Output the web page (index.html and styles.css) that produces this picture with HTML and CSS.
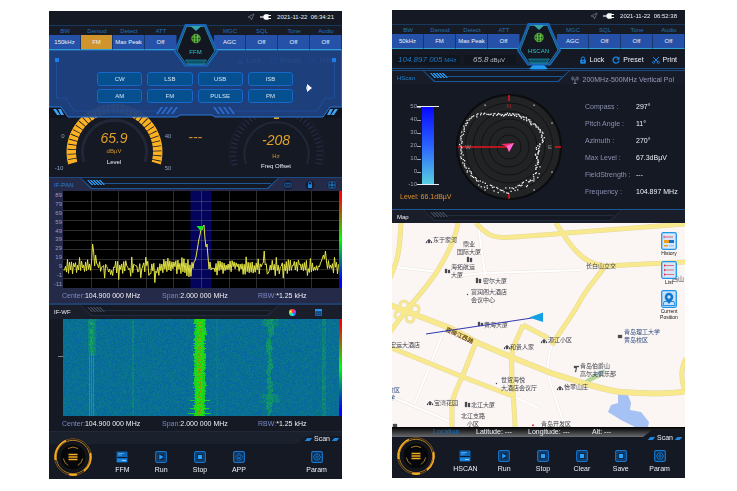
FILE: index.html
```html
<!DOCTYPE html>
<html lang="en">
<head>
    <meta charset="UTF-8">
    <meta name="viewport" content="width=device-width, initial-scale=1.0">
    <title>Spectrum Receiver</title>
    <link rel="stylesheet" href="styles.css">
</head>
<body>
    <!-- shared icons -->
    <svg class="defs" aria-hidden="true">
        <symbol id="i-send" viewBox="0 0 8 8"><path d="M7 1 1 4l2.600.6L4.400 7z" fill="none" stroke="#6c7484" stroke-width=".8"/></symbol>
        <symbol id="i-plug" viewBox="0 0 12 8"><path d="M0 4h4" stroke="#fff" stroke-width="1.200"/><path d="M3.500 2.500 5 1.300h3.500v5.400H5L3.500 5.500z" fill="#fff"/><path d="M8 2.500h3M8 5.500h3" stroke="#fff" stroke-width="1.100"/></symbol>
        <symbol id="i-hex" viewBox="0 0 44 46">
            <path d="M11.500 1h20L43 27.500 33 41.500H11L1 27.500z" fill="#151b29" stroke="#1a62b8" stroke-width="2"/>
            <path d="M12.500 2.500h18L41 27 32 40H12L3 27z" fill="#121722" stroke="#25b5dc" stroke-width=".7"/>
            <path d="M16.500 2h11L22 7z" fill="#36a6a8"/>
            <path d="M11.500 36h21l-3 4h-15z" fill="#0d5266" stroke="#1c9dc0" stroke-width=".6"/>
            <circle cx="22" cy="14.500" r="4.300" fill="#1d5a26" stroke="#6fce3c" stroke-width=".7"/>
            <path d="M18 13h8M18 16h8M20.500 10.500v8M23.500 10.500v8M22 14.500l3-3" fill="none" stroke="#8be04c" stroke-width=".6"/>
        </symbol>
        <symbol id="i-lock" viewBox="0 0 8 8"><path d="M2.300 4V2.600a1.700 1.700 0 0 1 3.400 0V4" fill="none" stroke="#1787e8" stroke-width="1"/><rect x="1.200" y="3.700" width="5.600" height="4" rx=".6" fill="#1787e8"/><circle cx="4" cy="5.500" r=".7" fill="#0d2038"/></symbol>
        <symbol id="i-preset" viewBox="0 0 8 8"><path d="M6.400 2.300A3 3 0 1 0 7 4.600" fill="none" stroke="#1787e8" stroke-width="1.300"/><path d="M7.500.6v3.200H4.300z" fill="#1787e8"/></symbol>
        <symbol id="i-print" viewBox="0 0 8 8"><path d="M1 1l5 5M7 1 2.500 5.500" stroke="#1787e8" stroke-width="1"/><circle cx="1.700" cy="6.300" r="1.100" fill="none" stroke="#1787e8" stroke-width=".9"/><circle cx="6.300" cy="6.300" r="1.100" fill="none" stroke="#1787e8" stroke-width=".9"/></symbol>
        <symbol id="i-fit" viewBox="0 0 10 10"><circle cx="5" cy="5" r="4.700" fill="#161c30"/><rect x="1.800" y="3.300" width="6.400" height="3.600" rx=".5" fill="none" stroke="#1b72c4" stroke-width=".8"/><path d="M3.500 5h1M5.500 5h1" stroke="#1b72c4"/></symbol>
        <symbol id="i-hold" viewBox="0 0 10 10"><circle cx="5" cy="5" r="4.700" fill="#161c30"/><rect x="3" y="4.200" width="4" height="3.800" fill="#1b83dc"/><path d="M3.500 4V3a1.500 1.500 0 0 1 3 0v1" fill="none" stroke="#1b83dc" stroke-width=".7"/></symbol>
        <symbol id="i-grid" viewBox="0 0 10 10"><circle cx="5" cy="5" r="4.700" fill="#161c30"/><rect x="1.800" y="1.800" width="6.400" height="6.400" rx="1" fill="none" stroke="#1b72c4" stroke-width=".8"/><path d="M5 2v6M2 5h6" stroke="#1b83dc" stroke-width="1"/></symbol>
        <symbol id="i-menu" viewBox="0 0 40 40">
            <circle cx="20" cy="20" r="19" fill="#11141d"/>
            <circle cx="20" cy="20" r="18.300" fill="none" stroke="#8a601c" stroke-width=".8"/>
            <circle cx="20" cy="20" r="16.700" fill="none" stroke="#c88a22" stroke-width=".9"/>
            <path d="M2.500 23A18 18 0 0 1 13 3.500M37.500 16A18 18 0 0 1 31 34M16 37.500A18 18 0 0 0 24 37.600" fill="none" stroke="#f5ab22" stroke-width="1.800"/>
            <circle cx="20" cy="20" r="13" fill="#05070b" stroke="#2a2419" stroke-width=".5"/>
            <path d="M15 11.500a10 10 0 0 1 10 0M10.300 21.500a10 10 0 0 0 5 7M29.700 21.500a10 10 0 0 1-5 7" fill="none" stroke="#b8832a" stroke-width=".9"/>
            <path d="M15.500 17.500h9M15.500 20h9M15.500 22.500h9" stroke="#f5ab22" stroke-width="1.300"/>
        </symbol>
        <symbol id="i-mode" viewBox="0 0 12 12"><rect x=".5" y=".5" width="11" height="11" rx="1" fill="#0d66b8"/><path d="M1 6h10v1.300H1z" fill="#0c1d33"/><path d="M2 2.500h6M2 4h4" stroke="#6fbaf5" stroke-width=".7"/><path d="M1 7.500h10v3.500H1z" fill="#1b86e0"/><path d="M6 9.500h4" stroke="#9bd0fa" stroke-width=".9"/></symbol>
        <symbol id="i-run" viewBox="0 0 12 12"><rect x=".7" y=".7" width="10.600" height="10.600" rx="1.200" fill="#0b2a4c" stroke="#1877cd" stroke-width="1.200"/><rect x="2.700" y="2.700" width="6.600" height="6.600" fill="none" stroke="#14508c" stroke-width=".6"/><path d="M4.300 3.600 8.500 6 4.300 8.400z" fill="#2aa0fa"/></symbol>
        <symbol id="i-stop" viewBox="0 0 12 12"><rect x=".7" y=".7" width="10.600" height="10.600" rx="1.200" fill="#0b2a4c" stroke="#1877cd" stroke-width="1.200"/><rect x="2.500" y="2.500" width="7" height="7" fill="none" stroke="#14508c" stroke-width=".6"/><rect x="4" y="4" width="4" height="4" fill="#2aa0fa"/></symbol>
        <symbol id="i-app" viewBox="0 0 12 12"><rect x=".7" y=".7" width="10.600" height="10.600" rx="1.200" fill="#0b2a4c" stroke="#1877cd" stroke-width="1.200"/><circle cx="6" cy="6" r="3.500" fill="none" stroke="#1b6db8" stroke-width=".7"/><circle cx="6" cy="5.600" r="1.800" fill="none" stroke="#1b7ed6" stroke-width=".7"/><path d="M4.500 9 6 6l1.500 3" fill="none" stroke="#1b7ed6" stroke-width=".7"/></symbol>
        <symbol id="i-param" viewBox="0 0 12 12"><rect x=".7" y=".7" width="10.600" height="10.600" rx="1.200" fill="#0b2a4c" stroke="#1877cd" stroke-width="1.200"/><path d="M4.300 3h3.400l1.800 3-1.800 3H4.300L2.500 6z" fill="none" stroke="#1b7ed6" stroke-width=".9"/><circle cx="6" cy="6" r="1.200" fill="none" stroke="#1b7ed6" stroke-width=".8"/></symbol>
    </svg>

    <main class="screens">
        <!-- fixed frequency mode -->
        <section class="device">
            <div class="status-bar">
                <svg class="icon-send"><use href="#i-send"/></svg>
                <svg class="icon-plug"><use href="#i-plug"/></svg>
                <time>2021-11-22&nbsp; 06:34:21</time>
            </div>
            <div class="params">
                <div class="param"><label for="f-bw">BW</label><button id="f-bw">150kHz</button></div>
                <div class="param active"><label for="f-demod">Demod</label><button id="f-demod">FM</button></div>
                <div class="param"><label for="f-detect">Detect</label><button id="f-detect">Max Peak</button></div>
                <div class="param"><label for="f-att">ATT</label><button id="f-att">Off</button></div>
                <button class="mode"><svg><use href="#i-hex"/></svg><span>FFM</span></button>
                <div class="param"><label for="f-mgc">MGC</label><button id="f-mgc">AGC</button></div>
                <div class="param"><label for="f-sql">SQL</label><button id="f-sql">Off</button></div>
                <div class="param"><label for="f-tone">Tone</label><button id="f-tone">Off</button></div>
                <div class="param"><label for="f-audio">Audio</label><button id="f-audio">Off</button></div>
            </div>

            <div class="under-popup">
                <div class="toolbar">
                    <div class="actions">
                        <button><svg><use href="#i-lock"/></svg>Lock</button>
                        <button><svg><use href="#i-preset"/></svg>Preset</button>
                        <button><svg><use href="#i-print"/></svg>Print</button>
                    </div>
                </div>
                <div class="gauges">
                    <svg class="gauge" viewBox="0 0 131 106">
                        <g fill="none">
                            <path d="M19.600 93.300A47.500 47.500 0 1 1 111.400 93.300" stroke="#f2a81f" stroke-width="1"/>
                            <path d="M24 92A43 43 0 1 1 107 92" stroke="#fbb122" stroke-width="9" stroke-dasharray="3.900 .8"/>
                            <path d="M35 91A32 32 0 1 1 96 91" stroke="#222738" stroke-width="3"/>
                        </g>
                        <g class="scale">
                            <text x="14" y="67">0</text><text x="119" y="67">40</text>
                            <text x="10" y="99">-10</text><text x="119" y="99">50</text>
                        </g>
                        <text class="digits" x="65" y="72">65.9</text>
                        <text class="unit" x="65" y="82">dBµV</text>
                        <text class="name" x="65" y="93">Level</text>
                    </svg>
                    <div class="blank">---</div>
                    <svg class="gauge" viewBox="0 0 131 106">
                        <g fill="none">
                            <path d="M24 94A43 43 0 1 1 107 94" stroke="#282b48" stroke-width="6" stroke-dasharray="1.200 3"/>
                            <path d="M20 94A47 47 0 1 1 111 94" stroke="#1e2133" stroke-width="1"/>
                            <path d="M35 93A32 32 0 1 1 96 93" stroke="#222738" stroke-width="2"/>
                        </g>
                        <path d="M63 46h5v2h-5z" fill="#e0a020"/>
                        <text class="digits" x="65" y="74">-208</text>
                        <text class="unit" x="65" y="87">Hz</text>
                        <text class="name" x="65" y="97">Freq Offset</text>
                    </svg>
                </div>

                <!-- demodulation picker -->
                <div class="popup">
                    <svg class="popup-frame" viewBox="0 0 293 68" preserveAspectRatio="none">
                        <path d="M0 56h20v12H0zM293 56h-20v12h20z" fill="#10141f"/>
                        <path d="M0 0H293V57H281L274 67H166L163 65H131L128 67H19L12 57H0Z" fill="#1e4182" fill-opacity=".95" stroke="#2a78d8" stroke-width="1"/>
                        <path d="M7.500 10V48H17L25 61H108M285.500 10V48H276L268 61H185" fill="none" stroke="#2552a0" stroke-width=".8"/>
                        <path d="M6 8h4v4H6zM283 8h4v4h-4z" fill="#1e7cee"/>
                        <path d="M4 59h3l4 6H8zM9 59h3l3 6h-3zM289 59h-3l-4 6h3zM284 59h-3l-3 6h3z" fill="#3fa2f5"/>
                        <path d="M107 64l5-7h2l-5 7zM112 64l5-7h2l-5 7zM117 64l5-7h2l-5 7zM122 64l5-7h2l-5 7zM186 64l-5-7h-2l5 7zM181 64l-5-7h-2l5 7zM176 64l-5-7h-2l5 7zM171 64l-5-7h-2l5 7z" fill="#2c70d6"/>
                    </svg>
                    <div class="choices">
                        <button>CW</button><button>LSB</button><button>USB</button><button>ISB</button>
                        <button>AM</button><button>FM</button><button>PULSE</button><button>PM</button>
                    </div>
                    <button class="next" aria-label="Next"><svg viewBox="0 0 6 8"><path d="M1 0l5 4-5 4z" fill="#fff"/><path d="M0 2l2 2-2 2z" fill="#9db8e0"/></svg></button>
                </div>
            </div>

            <header class="panel-head lit">
                <h2>IF-PAN</h2>
                <div class="rail"><i></i></div>
                <div class="head-icons">
                    <button aria-label="Fit"><svg><use href="#i-fit"/></svg></button>
                    <button aria-label="Hold"><svg><use href="#i-hold"/></svg></button>
                    <button aria-label="Grid"><svg><use href="#i-grid"/></svg></button>
                </div>
            </header>
            <div class="plot lit">
                <div class="axis">
                    <span>89</span><span>79</span><span>69</span><span>59</span><span>49</span><span>39</span><span>29</span><span>19</span><span>9</span><span>-1</span><span>-11</span>
                </div>
                <canvas id="spectrum"></canvas>
                <div class="heat"></div>
            </div>
            <div class="readout lit">
                <span><em>Center:</em>104.900 000 MHz</span>
                <span><em>Span:</em>2.000 000 MHz</span>
                <span><em>RBW:</em>*1.25 kHz</span>
            </div>

            <header class="panel-head waterfall-head">
                <h2>IF-WF</h2>
                <div class="rail"><i></i></div>
                <div class="head-icons">
                    <button aria-label="Palette"><span class="wheel"></span></button>
                    <button aria-label="Table"><svg viewBox="0 0 8 8"><path d="M.5.500h7v7h-7z" fill="#123a68" stroke="#1c6fc0"/><path d="M0 0h8v2.500H0z" fill="#2a90ee"/><path d="M3 2v6M5.500 2v6M0 5h8" stroke="#1c6fc0" stroke-width=".6"/></svg></button>
                </div>
            </header>
            <div class="plot">
                <div class="axis tick"></div>
                <canvas id="waterfall"></canvas>
                <div class="heat"></div>
            </div>
            <div class="readout">
                <span><em>Center:</em>104.900 000 MHz</span>
                <span><em>Span:</em>2.000 000 MHz</span>
                <span><em>RBW:</em>*1.25 kHz</span>
            </div>

            <nav class="nav">
                <svg class="nav-frame" viewBox="0 0 293 48" preserveAspectRatio="none">
                    <path d="M0 0H293V5H258L247 13H0z" fill="#1b202d"/>
                    <path d="M0 .5H293" stroke="#222838"/>
                </svg>
                <button class="menu" aria-label="Menu"><svg><use href="#i-menu"/></svg></button>
                <button class="scan">Scan</button>
                <div class="nav-items">
                    <button><svg><use href="#i-mode"/></svg>FFM</button>
                    <button><svg><use href="#i-run"/></svg>Run</button>
                    <button><svg><use href="#i-stop"/></svg>Stop</button>
                    <button><svg><use href="#i-app"/></svg>APP</button>
                    <button class="last"><svg><use href="#i-param"/></svg>Param</button>
                </div>
            </nav>
        </section>

        <!-- direction finding mode -->
        <section class="device">
            <div class="status-bar">
                <svg class="icon-send"><use href="#i-send"/></svg>
                <svg class="icon-plug"><use href="#i-plug"/></svg>
                <time>2021-11-22&nbsp; 06:52:38</time>
            </div>
            <div class="params">
                <div class="param"><label for="h-bw">BW</label><button id="h-bw">50kHz</button></div>
                <div class="param"><label for="h-demod">Demod</label><button id="h-demod">FM</button></div>
                <div class="param"><label for="h-detect">Detect</label><button id="h-detect">Max Peak</button></div>
                <div class="param"><label for="h-att">ATT</label><button id="h-att">Off</button></div>
                <button class="mode"><svg><use href="#i-hex"/></svg><span>HSCAN</span></button>
                <div class="param"><label for="h-mgc">MGC</label><button id="h-mgc">AGC</button></div>
                <div class="param"><label for="h-sql">SQL</label><button id="h-sql">Off</button></div>
                <div class="param"><label for="h-tone">Tone</label><button id="h-tone">Off</button></div>
                <div class="param"><label for="h-audio">Audio</label><button id="h-audio">Off</button></div>
            </div>
            <div class="toolbar">
                <svg class="toolbar-frame" viewBox="0 0 293 21" preserveAspectRatio="none">
                    <path d="M0 19.500H136L141 20.500H152L157 19.500H293" fill="none" stroke="#1a4f8c"/>
                    <path d="M141 16h11l4 4h-19z" fill="#1f9bf0"/>
                </svg>
                <div class="freq"><b>104.897 005</b> MHz</div>
                <div class="amp"><b>65.8</b> dBµV</div>
                <div class="actions">
                    <button><svg><use href="#i-lock"/></svg>Lock</button>
                    <button><svg><use href="#i-preset"/></svg>Preset</button>
                    <button><svg><use href="#i-print"/></svg>Print</button>
                </div>
            </div>

            <header class="panel-head blue">
                <h2>HScan</h2>
                <div class="rail"><i></i></div>
                <div class="antenna">
                    <svg viewBox="0 0 8 8"><path d="M1.600.5a3 3 0 0 0 0 4M6.400.5a3 3 0 0 1 0 4M2.800 1.300a1.600 1.600 0 0 0 0 2.400M5.200 1.300a1.600 1.600 0 0 1 0 2.400M4 2.500V7.500M2.500 7.500h3" fill="none" stroke="#8189a8" stroke-width=".9"/></svg>
                    200MHz-500MHz Vertical Pol
                </div>
            </header>
            <div class="finder">
                <div class="meter">
                    <div class="meter-row">
                        <ol><li>50</li><li>40</li><li>30</li><li>20</li><li>10</li><li>0</li><li>-10</li></ol>
                        <div class="meter-bar"></div>
                    </div>
                    <p>Level: 66.1dBµV</p>
                </div>
                <svg class="compass" viewBox="-54 -54 108 108">
                    <circle r="53" fill="#0b0c0e"/>
                    <circle r="51" fill="#222324"/>
                    <g fill="none" stroke="#0d0e10" stroke-width=".8">
                        <circle r="12"/><circle r="20"/><circle r="28"/><circle r="36"/><circle r="44"/>
                    </g>
                    <path d="M0-52v6M0 52v-6M46 0h6M-51 0H0" stroke="#e8131b" stroke-width="1.500"/>
                    <text x="0" y="-39" class="north">N</text>
                    <text x="-41" y="2">W</text>
                    <text x="41" y="2">E</text>
                    <g id="bearings" fill="#f4f4f4"></g>
                    <path d="M-8-3 5-4 0 5-2 0z" fill="#f02a68"/>
                    <path d="M-3-1 5-4 0 5-2 0z" fill="#ff6ad0"/>
                </svg>
                <dl class="readings">
                    <dt>Compass :</dt><dd>297°</dd>
                    <dt>Pitch Angle :</dt><dd>11°</dd>
                    <dt>Azimuth :</dt><dd>270°</dd>
                    <dt>Max Level :</dt><dd>67.3dBµV</dd>
                    <dt>FieldStrength :</dt><dd>---</dd>
                    <dt>Frequency :</dt><dd>104.897 MHz</dd>
                </dl>
            </div>

            <header class="panel-head map-head">
                <h2>Map</h2>
                <div class="rail"><i></i></div>
                <div class="head-icons"></div>
            </header>
            <div class="map">
                <svg viewBox="0 0 293 204" preserveAspectRatio="xMidYMid slice" lang="zh-CN">
                    <defs>
                        <g id="streets">
                            <path d="M9 0C8 15 8 30 3 42L-2 55M66 0C63 20 50 40 46 47S22 79 16 85L-2 109M84 0C95 12 100 16 123 14L293 1M164 0C172 12 175 18 184 28S203 42 213 43L293 39M213 43C205 55 195 65 187 80S170 105 160 122"/>
                            <path d="M0 125 71 154 123 174M84 119 71 152C65 165 60 175 60 185V204M131 102 121 125C117 140 122 170 123 204M131 102 156 115M294 135C289 145 288 155 293 168"/>
                            <path class="main" d="M-2 82 16 89 58 105 84 119 119 134 159 150C190 160 215 168 229 169S275 172 294 168"/>
                            <g class="loops">
                                <circle cx="12" cy="82" r="4"/>
                                <circle cx="23" cy="86" r="4"/>
                                <circle cx="7" cy="92" r="4"/>
                                <circle cx="18" cy="95" r="4"/>
                            </g>
                        </g>
                    </defs>
                    <rect width="293" height="204" fill="#fbf6f3"/>
                    <path class="lane-edge" d="M4 44 46 49M71 52 93 50 189 47M86 2 93 50 98 84M53 105 23 180M0 174 59 199M123 174 146 185M160 122C155 135 155 150 160 165S168 190 173 204"/>
                    <path class="lane" d="M4 44 46 49M71 52 93 50 189 47M86 2 93 50 98 84M53 105 23 180M0 174 59 199M123 174 146 185M160 122C155 135 155 150 160 165S168 190 173 204"/>
                    <path d="M226 170 236 172 239 180 238 187 249 189 257 199 256 204H243L229 197 216 189 219 182 226 180z" fill="#a6c1f4"/>
                    <path d="M192 158 205 149 214 147 208 154 196 160z" fill="#b5d69a"/>
                    <path d="M202 150 213 146 207 153z" fill="#a9cbe8"/>
                    <use class="road-edge" href="#streets"/>
                    <use class="road" href="#streets"/>
                    <g class="poi">
                        <path d="M34 19l3-3 3 3v1h-1v-2h-1v2h-2v-2h-1v2h-1zM75 34h2v5h-2zM78 35h2v4h-2zM53 46h2v4h-2zM56 47h2v3h-2zM84 55h2v5h-2zM87 56h2v4h-2zM86 99h2v4h-2zM89 100h2v3h-2zM112 125l3-3 3 3v1h-1v-2h-1v2h-2v-2h-1v2h-1zM149 119l3-3 3 3v1h-1v-2h-1v2h-2v-2h-1v2h-1zM165 166l3-3 3 3v1h-1v-2h-1v2h-2v-2h-1v2h-1zM35 181l3-3 3 3v1h-1v-2h-1v2h-2v-2h-1v2h-1zM73 179h2v5h-2zM76 180h2v4h-2zM226 112h4v3h-4zM182 143h5v1h-2l-1 5h-1l1-4h-2zM75 71h1v1h-1zM104 160h1v1h-1zM1 201h4v3H1z"/>
                        <path class="red" d="M140 203l1-2 1 2z"/>
                    </g>
                    <g class="place">
                        <text x="41" y="19">东于家河</text>
                        <text x="71" y="23">鼎业</text>
                        <text x="65" y="31">国际大厦</text>
                        <text x="59" y="46">海拓航运</text>
                        <text x="59" y="54">大厦</text>
                        <text x="91" y="60">密尔大厦</text>
                        <text x="79" y="71">富润阁大酒店</text>
                        <text x="79" y="79">会议中心</text>
                        <text x="194" y="45">长白山立交</text>
                        <text x="280" y="58">西山</text>
                        <text x="92" y="104">黄海大厦</text>
                        <text x="118" y="126">和贵人家</text>
                        <text x="156" y="119">源江小区</text>
                        <text x="-2" y="124">宏运大酒店</text>
                        <text x="109" y="159">世贸海悦</text>
                        <text x="109" y="167">大酒店会议厅</text>
                        <text x="172" y="166">怡翠山庄</text>
                        <text x="188" y="145">青岛伯爵山</text>
                        <text x="188" y="153">高尔夫俱乐部</text>
                        <text x="42" y="182">宝湾花园</text>
                        <text x="79" y="184">北江大厦</text>
                        <text x="69" y="195">北江支路</text>
                        <text x="75" y="203">小区</text>
                        <text x="149" y="203">青岛开发区</text>
                        <text class="school" x="232" y="111">青岛理工大学</text>
                        <text class="school" x="232" y="119">黄岛校区</text>
                        <text class="school" x="-4" y="169">校区</text>
                        <text class="school" x="-3" y="177">学</text>
                        <text class="street" transform="translate(53 108) rotate(25)">嘉陵江西路</text>
                    </g>
                    <path d="M34 111 140 95" stroke="#3238b4" stroke-width="1"/>
                    <path d="M137 94.500 151 89.500V99z" fill="#15a0e4"/>
                </svg>
                <div class="map-tools">
                    <button>
                        <svg viewBox="0 0 16 18"><rect x=".7" y=".7" width="14.600" height="16.600" rx="1.500" fill="#d6e7fa" stroke="#1f95ec" stroke-width="1.300"/><path d="M3 5h9M3 3.500v3" stroke="#e06070" stroke-width="1"/><path d="M3 8h5v3H3z" fill="#f0a020"/><path d="M8 8h5v3H8z" fill="#1273cc"/><path d="M3 13h4v1.500H3z" fill="#f0a020"/><path d="M8 13h5v1.500H8z" fill="#a9c8ee"/></svg>
                        History
                    </button>
                    <button>
                        <svg viewBox="0 0 16 18"><rect x=".7" y=".7" width="14.600" height="16.600" rx="1.500" fill="#d6e7fa" stroke="#1f95ec" stroke-width="1.300"/><path d="M3 4.500h10M3 9h10M3 13.500h10" stroke="#e06070" stroke-width=".9"/><path d="M3 3l2 1.500L3 6zM3 7.500 5 9l-2 1.500zM3 12l2 1.500L3 15z" fill="#d84555"/></svg>
                        List
                    </button>
                    <button>
                        <svg viewBox="0 0 16 18"><rect x=".7" y=".7" width="14.600" height="16.600" rx="1.500" fill="#c9e2fa" stroke="#1f95ec" stroke-width="1.300"/><path d="M3 11.500h10l1 4H2z" fill="none" stroke="#1b86dc" stroke-width=".9"/><path d="M8 14C5 10.500 3.700 9 3.700 7a4.300 4.300 0 0 1 8.600 0c0 2-1.300 3.500-4.300 7z" fill="#1378cc"/><circle cx="8" cy="7" r="1.700" fill="#c9e2fa"/></svg>
                        Current<br>Position
                    </button>
                </div>
            </div>
            <div class="location">
                <a href="#location">Location</a>
                <span>Latitude: ---</span>
                <span>Longitude: ---</span>
                <span>Alt: ---</span>
            </div>

            <nav class="nav raised">
                <svg class="nav-frame" viewBox="0 0 293 48" preserveAspectRatio="none">
                    <path d="M0 7H251L260 0H293V48H0z" fill="#151924"/>
                </svg>
                <button class="menu" aria-label="Menu"><svg><use href="#i-menu"/></svg></button>
                <button class="scan">Scan</button>
                <div class="nav-items">
                    <button><svg><use href="#i-mode"/></svg>HSCAN</button>
                    <button><svg><use href="#i-run"/></svg>Run</button>
                    <button><svg><use href="#i-stop"/></svg>Stop</button>
                    <button><svg><use href="#i-stop"/></svg>Clear</button>
                    <button><svg><use href="#i-stop"/></svg>Save</button>
                    <button><svg><use href="#i-param"/></svg>Param</button>
                </div>
            </nav>
        </section>
    </main>

    <script src="script.js"></script>
</body>
</html>
```
FILE: styles.css
```css
* {
    box-sizing: border-box;
}

body {
    margin: 0;
    background: #fff;
    font-family: "Liberation Sans", "Noto Sans CJK SC", sans-serif;
    font-size: 7px;
    line-height: 8px;
    color: #eef0f6;
}

button {
    margin: 0;
    padding: 0;
    border: 0;
    background: none;
    color: inherit;
    font: inherit;
    cursor: pointer;
}

h2, p, dl, dd, ol {
    margin: 0;
    padding: 0;
}

svg {
    display: block;
}

.defs {
    display: none;
}

.screens {
    display: grid;
    grid-template-columns: 1fr 1fr;
    align-items: start;
    gap: 50px;
    padding: 10px 52px 12px 49px;
}

.device {
    background: #151924;
    min-width: 0;
}

.device:first-child {
    margin-top: 1px;
}

/* status bar */
.status-bar {
    display: flex;
    align-items: center;
    justify-content: flex-end;
    height: 14px;
    padding: 0 8px 2px 0;
    font-size: 6px;
}

.icon-send {
    width: 8px;
    height: 8px;
    margin-right: 5px;
}

.icon-plug {
    width: 12px;
    height: 8px;
    margin-right: 5px;
}

/* parameter strip */
.params {
    display: grid;
    grid-template-columns: repeat(4, 32fr) 37fr repeat(4, 32fr);
    position: relative;
    z-index: 3;
    background: #171b25;
    border-top: 1px solid #17395f;
    font-size: 6px;
}

.param {
    display: flex;
    flex-direction: column;
    text-align: center;
}

.param label {
    height: 9px;
    line-height: 10px;
    color: #2272b8;
}

.param button {
    height: 15px;
    background: #2552a8;
    border-right: 1px solid #16366f;
    border-bottom: 1px solid #2d9fd0;
    white-space: nowrap;
}

.param.active button {
    background: #cf942c;
}

.mode {
    position: relative;
    color: #2fc4c8;
    font-size: 6px;
}

.mode svg {
    position: absolute;
    top: -2px;
    left: 50%;
    width: 44px;
    height: 46px;
    margin-left: -22px;
}

.mode span {
    position: absolute;
    top: 22px;
    left: 0;
    right: 0;
    text-align: center;
}

/* toolbar */
.toolbar {
    display: flex;
    align-items: center;
    position: relative;
    height: 21px;
    padding: 0 8px 0 2px;
    white-space: nowrap;
}

.toolbar-frame {
    position: absolute;
    inset: 0;
    width: 100%;
    height: 21px;
}

.freq,
.amp {
    height: 10px;
    line-height: 10px;
    font-size: 6px;
    background: #11151d;
}

.freq b,
.amp b {
    font-size: 8px;
    font-style: italic;
    font-weight: normal;
}

.freq {
    width: 66px;
    padding-left: 4px;
    color: #1f78c4;
}

.amp {
    width: 52px;
    margin-left: 4px;
    padding-left: 9px;
    color: #b4b9c4;
}

.actions {
    display: flex;
    gap: 8px;
    margin-left: auto;
}

.actions button {
    display: flex;
    align-items: center;
    gap: 3px;
}

.actions svg {
    width: 8px;
    height: 8px;
}

/* gauges and the popup above them */
.under-popup {
    position: relative;
}

.gauges {
    display: grid;
    grid-template-columns: 131fr 31fr 131fr;
    height: 106px;
}

.gauge {
    width: 100%;
    height: 106px;
}

.gauge text {
    text-anchor: middle;
    font-size: 6px;
}

.gauge .scale {
    fill: #8ca2c0;
}

.gauge .digits {
    fill: #e0a02a;
    font-size: 14px;
    font-style: italic;
}

.gauge .unit {
    fill: #d4962a;
}

.gauge .name {
    fill: #eef0f6;
}

.blank {
    padding-top: 59px;
    text-align: center;
    font-size: 14px;
    line-height: 14px;
    color: #c88d24;
}

.popup {
    position: absolute;
    top: 0;
    left: 0;
    right: 0;
    display: flex;
    align-items: center;
    height: 68px;
    padding: 7px 30px 0 48px;
}

.popup-frame {
    position: absolute;
    inset: 0;
    width: 100%;
    height: 68px;
}

.choices {
    display: grid;
    grid-template-columns: repeat(4, 1fr);
    gap: 3px 5px;
    flex: 1;
    position: relative;
}

.choices button {
    height: 14px;
    border: 1px solid #1767c6;
    border-radius: 3px;
    background: #06508f;
    color: #d5e3f4;
    font-size: 6px;
}

.next {
    position: relative;
    margin-left: 13px;
}

.next svg {
    width: 6px;
    height: 8px;
}

/* panel headers */
.panel-head {
    --edge: #232a39;
    --bar: #3a4150;
    display: flex;
    height: 14px;
    background: #1a1e2a;
    border-top: 1px solid #1b2231;
}

.panel-head h2 {
    width: 31px;
    padding-left: 5px;
    font-size: 6px;
    font-weight: normal;
    line-height: 14px;
    white-space: nowrap;
}

.rail {
    position: relative;
    flex: 1;
    height: 11px;
    background: var(--edge);
    clip-path: polygon(0 0, 100% 0, calc(100% - 11px) 100%, 11px 100%);
}

.rail::before {
    content: "";
    position: absolute;
    inset: 0 1px 1px;
    background: #151924;
    clip-path: polygon(0 0, 100% 0, calc(100% - 11px) 100%, 11px 100%);
}

.rail::after {
    content: "";
    position: absolute;
    top: 5px;
    left: 22px;
    right: 8px;
    height: 1px;
    background: var(--edge);
}

.rail i {
    position: absolute;
    z-index: 1;
    top: 2px;
    left: 9px;
    width: 14px;
    height: 5px;
    background: repeating-linear-gradient(90deg, var(--bar) 0 2px, #151924 2px 3px);
    transform: skewX(38deg);
}

.panel-head.lit {
    --edge: #1b5796;
    --bar: #2290e4;
    background: #262a49;
    border-color: #1b4a80;
}

.lit h2,
.blue h2 {
    color: #1f80d4;
}

.panel-head.blue {
    --edge: #1b5796;
    --bar: #2290e4;
    background: #171c28;
    border-color: #1b4a80;
}

.head-icons {
    display: flex;
    align-items: center;
    justify-content: space-between;
    width: 63px;
    padding: 0 5px 0 4px;
}

.head-icons svg {
    width: 10px;
    height: 10px;
}

.waterfall-head {
    height: 16px;
    border-top: 2px solid #213f6c;
}

.waterfall-head .head-icons {
    padding: 0 20px 0 10px;
}

.waterfall-head svg,
.wheel {
    display: block;
    width: 7px;
    height: 7px;
}

.wheel {
    border-radius: 50%;
    background: conic-gradient(#f33, #d3f, #36f, #3df, #3e5, #fe3, #f33);
}

.map-head {
    border-top: 1px solid #1b5796;
}

.antenna {
    display: flex;
    align-items: center;
    gap: 4px;
    padding: 5px 11px 0 1px;
    color: #959bb8;
    white-space: nowrap;
}

.antenna svg {
    width: 8px;
    height: 8px;
}

/* plots */
.plot {
    display: flex;
    height: 97px;
}

.plot.lit,
.readout.lit {
    background: #262a49;
}

.axis {
    display: flex;
    flex-direction: column;
    justify-content: space-between;
    width: 14px;
    padding: 0 1px 0 0;
    text-align: right;
    font-size: 6px;
    color: #959dc4;
}

.axis.tick {
    justify-content: flex-start;
    padding: 37px 0 0 9px;
}

.axis.tick::before {
    content: "";
    height: 1px;
    background: #7a8190;
}

.plot canvas {
    flex: 1;
    min-width: 0;
    width: 0;
    height: 97px;
}

.heat {
    width: 3px;
    background: linear-gradient(#f00, #f00 5%, #0f0 50%, #00f 92%);
}

.readout {
    display: grid;
    grid-template-columns: 100fr 96fr 84fr;
    height: 15px;
    padding-left: 13px;
    line-height: 15px;
    white-space: nowrap;
}

.readout em {
    font-style: normal;
    color: #7a89c6;
}

/* direction finder */
.finder {
    display: grid;
    grid-template-columns: 63fr 108fr 122fr;
    height: 125px;
}

.meter {
    padding: 16px 0 0 8px;
    white-space: nowrap;
}

.meter-row {
    display: flex;
    align-items: center;
    margin-bottom: 2px;
}

.meter ol {
    width: 17px;
    list-style: none;
    text-align: right;
    font-size: 6px;
    line-height: 13px;
    color: #9aa0b5;
}

.meter li {
    height: 13px;
}

.meter-bar {
    width: 22px;
    height: 79px;
    border: solid #e8ecf4;
    border-width: 1px 0;
    background:
        repeating-linear-gradient(#9aa0b0 0 1px, transparent 1px 13px) left / 4px 100% no-repeat,
        linear-gradient(#0808ff, #2a62ff 50%, #58cfe0) 5px 0 / 12px 100% no-repeat;
}

.meter p {
    color: #e0902c;
}

.compass {
    width: 100%;
    height: 108px;
    margin-top: 9px;
}

.compass text {
    fill: #8d8d90;
    font-size: 6px;
    text-anchor: middle;
}

.compass .north {
    fill: #c81c20;
}

.readings {
    display: grid;
    grid-template-columns: 51px 1fr;
    grid-auto-rows: 16px;
    align-content: start;
    row-gap: 1px;
    padding: 15px 0 0 22px;
    line-height: 16px;
    white-space: nowrap;
}

.readings dt {
    color: #8a90b0;
}

/* map */
.map {
    position: relative;
    height: 204px;
    overflow: hidden;
}

.map > svg {
    width: 100%;
    height: 204px;
}

.lane,
.lane-edge {
    fill: none;
    stroke: #fff;
    stroke-width: 2px;
}

.lane-edge {
    stroke: #ece6e2;
    stroke-width: 3px;
}

.road,
.road-edge {
    fill: none;
    stroke-linejoin: round;
}

.road-edge {
    --main: 6px;
    --loop: 3px;
    stroke: #e4d8a8;
    stroke-width: 5px;
}

.road {
    --main: 5px;
    --loop: 2px;
    stroke: #f8e98c;
    stroke-width: 4px;
}

.main {
    stroke-width: var(--main);
}

.loops {
    stroke-width: var(--loop);
}

.poi {
    fill: #4a4a52;
    stroke: #4a4a52;
    stroke-width: .3;
}

.poi .red {
    fill: #e02030;
    stroke: #e02030;
}

.place text {
    fill: #3e3e48;
    font-family: "Noto Sans CJK SC", sans-serif;
    font-size: 6px;
}

.place .school {
    fill: #2d4a80;
}

.place .street {
    fill: #6b4a1c;
    font-weight: bold;
}

.map-tools {
    position: absolute;
    top: 9px;
    right: 5px;
    display: flex;
    flex-direction: column;
    gap: 5px;
    width: 22px;
    color: #111;
    font-size: 5px;
    line-height: 6px;
}

.map-tools svg {
    width: 16px;
    height: 18px;
    margin: 0 auto;
}

.location {
    display: grid;
    grid-template-columns: 43fr 52fr 64fr 93fr;
    height: 10px;
    padding-left: 41px;
    background: linear-gradient(#000, #6a6c70);
    line-height: 10px;
    white-space: nowrap;
}

.location a {
    color: #1c6db8;
    text-decoration: none;
}

/* bottom navigation */
.nav {
    position: relative;
    height: 48px;
    padding: 20px 6px 0 54px;
}

.nav.raised {
    margin-top: -7px;
}

.nav-frame {
    position: absolute;
    inset: 0;
    width: 100%;
    height: 48px;
}

.menu {
    position: absolute;
    top: 6px;
    left: 4px;
}

.menu svg {
    width: 40px;
    height: 40px;
}

.scan {
    position: absolute;
    top: 4px;
    right: 4px;
    display: flex;
    align-items: center;
    gap: 3px;
}

.scan::before,
.scan::after {
    content: "";
    width: 5px;
    height: 3px;
    background: #1f86dc;
    transform: skewX(-40deg);
}

.nav-items {
    display: grid;
    grid-template-columns: repeat(6, 1fr);
    position: relative;
}

.nav-items button {
    display: flex;
    flex-direction: column;
    align-items: center;
    gap: 3px;
}

.nav-items svg {
    width: 12px;
    height: 12px;
}

.nav-items .last {
    grid-column: 6;
}
```
FILE: script.js
```js
// small seeded generator so that the traces look the same on every load
let seed = 7;
function rnd() {
    seed = (seed * 16807) % 2147483647;
    return seed / 2147483647;
}

function setup(id) {
    const canvas = document.getElementById(id);
    canvas.width = canvas.clientWidth;
    canvas.height = canvas.clientHeight;
    return canvas;
}

function drawSpectrum() {
    const c = setup('spectrum');
    const g = c.getContext('2d');
    const w = c.width, h = c.height;
    const k = w / 275;

    g.fillStyle = '#000';
    g.fillRect(0, 0, w, h);
    g.fillStyle = '#04045c';
    g.fillRect(127 * k, 0, 21 * k, h);

    g.fillStyle = 'rgba(150, 150, 150, 0.3)';
    for (let i = 1; i < 10; i++) {
        g.fillRect(Math.round(i * w / 10), 0, 1, h);
        g.fillRect(0, Math.round(i * h / 10), w, 1);
    }

    // [x, y] of the carriers above the noise floor
    const peaks = {
        28: 70, 29: 53, 30: 60, 31: 75, 32: 64, 33: 72,
        131: 70, 132: 66, 133: 60, 134: 54, 135: 48, 136: 44, 137: 38, 138: 39, 139: 36, 140: 34,
        141: 48, 142: 56, 143: 53, 144: 66, 145: 78, 199: 72, 200: 60, 201: 74,
        257: 70, 258: 67, 259: 64, 260: 68, 261: 60, 262: 70
    };
    g.strokeStyle = '#e2e244';
    g.lineWidth = 1;
    g.beginPath();
    for (let x = 0; x < 275; x++) {
        // alternate above and below the floor to get a dense trace
        const side = x % 2 ? 1 : -1;
        let y = 76 + side * rnd() * 7 + (rnd() - 0.5) * 7;
        if (rnd() > 0.95) y += 7;
        if (peaks[x]) y = peaks[x];
        g.lineTo(x * k + 0.5, y);
    }
    g.stroke();

    g.fillStyle = '#10e020';
    g.beginPath();
    g.moveTo(133 * k, 35);
    g.lineTo(141 * k, 35);
    g.lineTo(137 * k, 40);
    g.fill();
}

function drawWaterfall() {
    const c = setup('waterfall');
    const g = c.getContext('2d');
    const w = c.width, h = c.height;
    const img = g.createImageData(w, h);
    let drift = 0;

    for (let y = 0; y < h; y++) {
        drift = drift * 0.7 + (rnd() - 0.5) * 2;
        const wide = 4.5 + rnd() * 2 + (y > 75 && rnd() > 0.7 ? 5 : 0);
        const blob = 1 + Math.abs(Math.sin(y / 6)) * 2 + (y > 74 && y < 84 ? 7 : 0) + (y < 7 ? 6 : 0);
        for (let x = 0; x < w; x++) {
            const px = x * 275 / w;
            let v = 0.02 + rnd() * 0.16;
            const d1 = Math.abs(px - 28);
            if (y < 36) {
                if (d1 < 4) v += (0.45 - d1 * 0.1) * rnd() + 0.08;
            } else if (d1 < 3 && Math.round(d1) % 2 === 0) {
                v += 0.36;
            }
            if (Math.abs(px - 69) < 1) v += 0.05 + rnd() * 0.14;
            const d2 = Math.abs(px - 136 - drift * 0.4);
            if (d2 < wide) v += 0.8 - d2 / wide * 0.2;
            const d3 = Math.abs(px - 206 - drift);
            if (d3 < blob) v += (d3 < 3 ? 0.12 : 0.02) + rnd() * 0.2;
            if (Math.abs(px - 260) < 2) v += 0.02 + rnd() * 0.22;
            if (Math.abs(px - 153) < 1) v += rnd() * 0.1;

            // blue -> green -> olive core
            let r = 6 + v * 30;
            let gr = 96 + v * 150;
            let b = 166 - v * 175;
            if (d2 < 1.5 && rnd() > 0.4) {
                r = 90 + rnd() * 50;
                gr = 165;
                b = 10;
            }
            const i = (y * w + x) * 4;
            img.data[i] = r;
            img.data[i + 1] = gr;
            img.data[i + 2] = b;
            img.data[i + 3] = 255;
        }
    }
    g.putImageData(img, 0, 0);
}

function drawBearings() {
    // radius of the pattern every 15 degrees, clockwise from north
    const shape = [33, 33, 33, 33, 35, 35, 28, 28, 33, 38, 39, 41, 43, 44, 45, 46, 47, 48, 49, 49, 50, 46, 38, 34, 33];
    const group = document.getElementById('bearings');
    let out = '';
    for (let a = 0; a < 360; a += 1.8) {
        const i = Math.floor(a / 15);
        const t = a / 15 - i;
        const r = shape[i] * (1 - t) + shape[i + 1] * t + (rnd() - 0.5) * (a > 120 && a < 220 ? 6 : 3);
        const x = r * Math.sin(a * Math.PI / 180);
        const y = -r * Math.cos(a * Math.PI / 180);
        out += `<rect x="${x.toFixed(1)}" y="${y.toFixed(1)}" width="1.3" height="1.3"/>`;
    }
    for (let a = 30; a < 360; a += 30) {
        if (a % 90 === 0) continue;
        const x = 49 * Math.sin(a * Math.PI / 180);
        const y = -49 * Math.cos(a * Math.PI / 180);
        out += `<rect x="${x.toFixed(1)}" y="${y.toFixed(1)}" width="1.2" height="1.2"/>`;
    }
    group.innerHTML = out;
}

drawSpectrum();
drawWaterfall();
drawBearings();
```
